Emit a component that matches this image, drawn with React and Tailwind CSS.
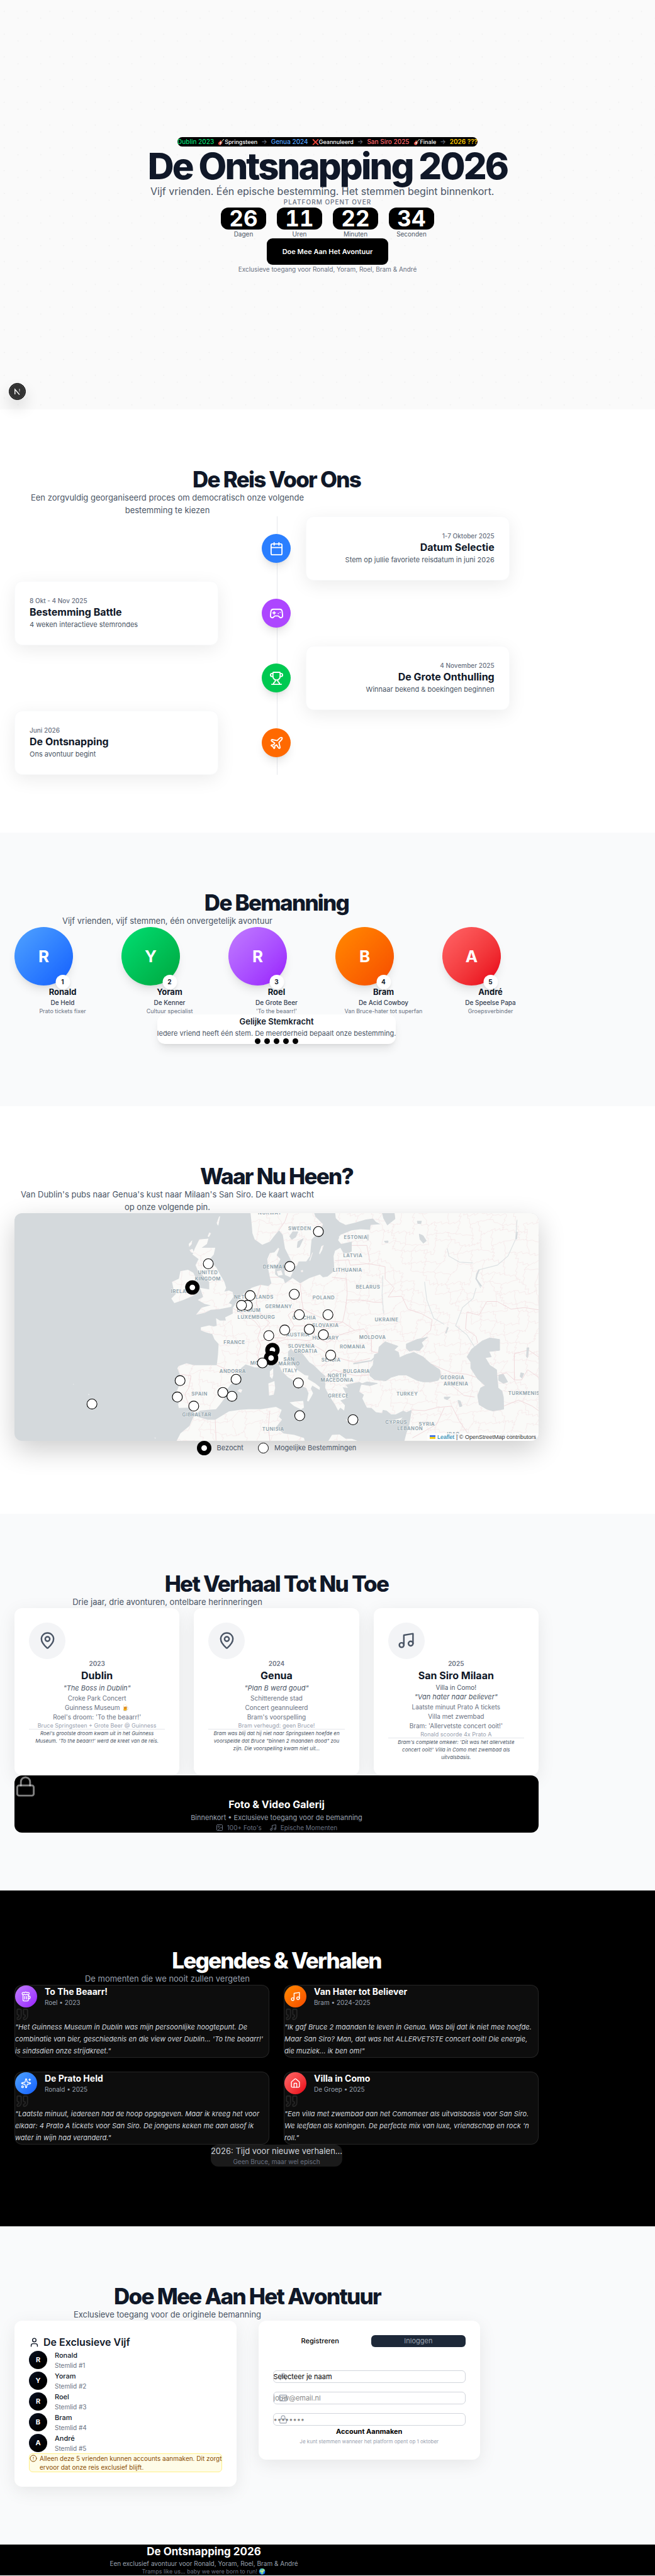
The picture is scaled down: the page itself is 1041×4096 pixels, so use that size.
import React from "react";
import {
  Calendar, Gamepad2, Trophy, Plane, MapPin, Music, Lock, Image as ImageIcon,
  Beer, Sparkles, House, Quote, User, Mail, CircleAlert,
} from "lucide-react";

const heading = "text-center text-[35px] leading-[38px] font-extrabold tracking-tighter";
const lead = "max-w-[486px] text-center text-[13px] leading-[20px] whitespace-pre-line";
const cardShadow = "shadow-[0_7px_29px_rgba(0,0,0,0.08)]";

function Section({ id, title, sub, tone = "bg-white", dark = false, width = "max-w-[833px]", children }) {
  return (
    <section id={id} className={`${tone} px-[23px] py-[92px]`}>
      <div className={width}>
        <h2 className={`${heading} ${dark ? "text-white" : "text-gray-900"}`}>{title}</h2>
        <p className={`${lead} ${dark ? "text-gray-400" : "text-gray-600"}`}>{sub}</p>
        {children}
      </div>
    </section>
  );
}

/* ---------- Hero ---------- */

function NextBadge() {
  return (
    <button type="button" aria-label="Ontwikkelmenu" className="absolute bottom-[15px] left-[14px] z-10 flex size-[27px] items-center justify-center rounded-full border border-black bg-[#333] shadow-[0_12px_23px_rgba(0,0,0,0.14)] ring-1 ring-inset ring-white/15">
      <svg viewBox="0 0 40 40" className="size-[27px]" fill="none">
        <defs>
          <linearGradient id="badgeFade" x1="0" y1="12" x2="0" y2="24" gradientUnits="userSpaceOnUse">
            <stop offset="0" stopColor="#fff" />
            <stop offset="1" stopColor="#fff" stopOpacity="0" />
          </linearGradient>
        </defs>
        <path d="M14 27V14.5L25.5 28" stroke="#fff" strokeWidth="2.2" />
        <path d="M25.5 13.5V23" stroke="url(#badgeFade)" strokeWidth="2.2" />
      </svg>
    </button>
  );
}

function Countdown({ value, label }) {
  return (
    <div className="w-[72px] text-center">
      <div className="rounded-[12px] bg-black text-[35px] leading-[35px] font-bold text-white tabular-nums">{value}</div>
      <div className="text-[10px] leading-[14px] text-gray-600">{label}</div>
    </div>
  );
}

function Hero() {
  const arrow = <span className="text-[10px] text-gray-500">→</span>;
  return (
    <header className="relative flex min-h-[651px] flex-col items-center justify-center bg-[#fafafa] pt-[3px]">
      <svg className="absolute inset-0 h-full w-full" aria-hidden="true" viewBox="0 0 1440 900" preserveAspectRatio="xMidYMid slice">
        <defs>
          <pattern id="dots" width="50" height="50" patternUnits="userSpaceOnUse">
            <rect x="9" y="24" width="2" height="2" fill="#ebebeb" />
            <rect x="39" y="39" width="2" height="2" fill="#ebebeb" />
          </pattern>
        </defs>
        <rect width="1440" height="900" fill="url(#dots)" />
      </svg>
      <div className="relative w-fit">
        <div className="mx-auto flex w-fit items-center gap-[6px] rounded-[8px] bg-black text-[10px] leading-[15px] font-medium whitespace-nowrap">
          <span className="text-green-400">Dublin 2023</span>
          <span className="text-[9px] text-white">🎸Springsteen</span>
          {arrow}
          <span className="text-blue-400">Genua 2024</span>
          <span className="text-[9px] text-white">❌Geannuleerd</span>
          {arrow}
          <span className="text-red-400">San Siro 2025</span>
          <span className="text-[9px] text-white">🎸Finale</span>
          {arrow}
          <span className="font-semibold text-yellow-400">2026 ???</span>
        </div>
        <h1 className="text-center text-[58px] leading-[63px] font-extrabold tracking-tighter text-gray-900">De Ontsnapping 2026</h1>
        <p className="max-w-[555px] text-center text-[16px] leading-[17px] text-gray-600">
          Vijf vrienden. Één epische bestemming. Het stemmen begint binnenkort.
        </p>
        <p className="text-center text-[10px] leading-[17px] font-medium tracking-widest text-gray-500 uppercase">Platform opent over</p>
        <div className="flex justify-center gap-[17px]">
          <Countdown value="26" label="Dagen" />
          <Countdown value="11" label="Uren" />
          <Countdown value="22" label="Minuten" />
          <Countdown value="34" label="Seconden" />
        </div>
        <a href="#meedoen" className="mx-auto block w-fit rounded-[9px] bg-black px-[25px] text-[11px] leading-[42px] font-semibold text-white">
          Doe Mee Aan Het Avontuur
        </a>
        <p className="text-center text-[10px] leading-[15px] text-gray-500">Exclusieve toegang voor Ronald, Yoram, Roel, Bram &amp; André</p>
      </div>
      <NextBadge />
    </header>
  );
}

/* ---------- Timeline ---------- */

const steps = [
  { date: "1-7 Oktober 2025", title: "Datum Selectie", text: "Stem op jullie favoriete reisdatum in juni 2026", Icon: Calendar, color: "bg-blue-500" },
  { date: "8 Okt - 4 Nov 2025", title: "Bestemming Battle", text: "4 weken interactieve stemrondes", Icon: Gamepad2, color: "bg-purple-500" },
  { date: "4 November 2025", title: "De Grote Onthulling", text: "Winnaar bekend & boekingen beginnen", Icon: Trophy, color: "bg-green-500" },
  { date: "Juni 2026", title: "De Ontsnapping", text: "Ons avontuur begint", Icon: Plane, color: "bg-orange-500" },
];

function Timeline() {
  return (
    <div className="relative flex flex-col gap-px">
      <div className="absolute inset-y-0 left-1/2 w-px bg-gray-200" />
      {steps.map(({ date, title, text, Icon, color }, i) => (
        <div key={title} className="grid grid-cols-[14fr_3fr_2fr_1fr_14fr_2fr] items-center">
          <div className={`row-start-1 rounded-[12px] border border-gray-50 bg-white p-[23px] ${cardShadow} ${i % 2 === 0 ? "col-start-5 text-right" : "col-start-1"}`}>
            <p className="text-[10px] leading-[14px] font-medium text-gray-500">{date}</p>
            <h3 className="text-[16px] leading-[23px] font-bold text-gray-900">{title}</h3>
            <p className="text-[11px] leading-[17px] text-gray-600">{text}</p>
          </div>
          <div className={`relative col-start-3 row-start-1 mx-auto flex size-[46px] items-center justify-center rounded-full text-white shadow-lg ${color}`}>
            <Icon className="size-[23px]" />
          </div>
        </div>
      ))}
    </div>
  );
}

/* ---------- Crew ---------- */

const crew = [
  { name: "Ronald", role: "De Held", note: "Prato tickets fixer", color: "from-blue-400 to-blue-600" },
  { name: "Yoram", role: "De Kenner", note: "Cultuur specialist", color: "from-green-400 to-green-600" },
  { name: "Roel", role: "De Grote Beer", note: "'To the beaarr!'", color: "from-purple-400 to-purple-600" },
  { name: "Bram", role: "De Acid Cowboy", note: "Van Bruce-hater tot superfan", color: "from-orange-400 to-orange-600" },
  { name: "André", role: "De Speelse Papa", note: "Groepsverbinder", color: "from-red-400 to-red-600" },
];

function Crew() {
  return (
    <>
      <div className="grid grid-cols-5 gap-[17px]">
        {crew.map((m, i) => (
          <article key={m.name} className="text-center">
            <div className="relative">
              <div className={`flex size-[93px] items-center justify-center rounded-full bg-linear-to-br text-[26px] font-bold text-white shadow-lg ${m.color}`}>{m.name[0]}</div>
              <span className="absolute -bottom-[6px] left-1/2 flex size-[23px] -translate-x-1/2 items-center justify-center rounded-full bg-white text-[10px] font-bold text-gray-900 shadow-md">{i + 1}</span>
            </div>
            <h3 className="text-[13px] leading-[20px] font-bold text-gray-900">{m.name}</h3>
            <p className="text-[10px] leading-[15px] font-medium text-gray-700">{m.role}</p>
            <p className="text-[9px] leading-[11px] text-gray-500">{m.note}</p>
          </article>
        ))}
      </div>
      <div className="mx-auto mb-[7px] w-fit rounded-[12px] bg-white text-center shadow-lg">
        <h3 className="text-[13px] leading-[22px] font-semibold text-gray-900">Gelijke Stemkracht</h3>
        <p className="text-[11px] leading-[16px] text-gray-600">Iedere vriend heeft één stem. De meerderheid bepaalt onze bestemming.</p>
        <div className="flex justify-center gap-[6px]">
          {crew.map((m) => <span key={m.name} className="size-[9px] rounded-full bg-black" />)}
        </div>
      </div>
    </>
  );
}

/* ---------- Map ---------- */

const land = [
  "455,655 470,630 490,600 530,555 580,520 600,512 640,500 690,508 710,490 700,450 690,400 683,330 700,290 730,285 755,255 762,262 745,305 770,330 755,360 735,380 735,430 760,450 790,462 800,490 850,455 900,490 960,455 1030,432 1050,450 1080,445 1110,420 1125,400 1120,310 1130,275 1165,255 1185,290 1215,292 1240,280 1240,215 1170,230 1150,205 1165,170 1240,140 1300,133 1360,137 1365,105 1430,100 1400,85 1380,62 1330,70 1260,90 1200,105 1160,85 1135,60 1130,20 2480,20 2480,1530 1587,1530 1600,1480 1620,1420 1627,1380 1635,1325 1600,1340 1580,1330 1530,1355 1500,1355 1470,1330 1445,1325 1440,1345 1400,1340 1370,1312 1340,1310 1330,1290 1310,1250 1320,1225 1290,1205 1300,1165 1310,1150 1290,1140 1240,1150 1200,1160 1215,1180 1180,1175 1205,1225 1200,1250 1165,1262 1195,1295 1190,1330 1165,1310 1150,1330 1130,1290 1090,1230 1065,1180 1065,1100 1040,1080 990,1030 960,1010 925,965 905,940 870,925 860,945 840,920 820,940 820,975 850,1010 880,1060 930,1095 955,1100 950,1120 1000,1150 1030,1175 1028,1193 980,1165 970,1185 985,1215 975,1235 955,1270 945,1265 955,1215 940,1180 900,1165 870,1140 820,1110 780,1070 755,1020 720,1000 690,1010 650,1045 600,1045 540,1025 510,1050 500,1080 500,1110 440,1160 410,1200 395,1230 400,1250 370,1290 345,1320 290,1325 240,1330 215,1350 195,1345 170,1310 100,1312 95,1290 110,1250 72,1250 75,1225 100,1170 110,1100 90,1050 100,1035 150,1018 200,1030 300,1030 350,1030 358,960 362,890 335,860 320,825 275,812 245,800 245,780 300,768 330,775 350,770 345,720 370,735 410,735 405,715 455,690",
  "572,20 580,100 585,160 600,200 650,235 700,215 735,170 760,140 785,170 800,260 840,340 850,395 880,370 890,345 940,345 965,310 975,200 1005,170 1040,130 1050,100 1000,50 990,20",
  "235,200 295,195 285,230 250,255 340,255 330,300 300,335 350,390 365,420 400,480 412,520 400,545 430,537 455,548 460,580 430,620 450,630 445,645 370,660 310,665 270,685 213,697 250,650 310,635 270,625 225,600 260,580 240,520 300,530 300,480 250,430 225,405 210,370 230,330 190,300 205,260",
  "110,410 160,400 195,420 215,460 215,500 200,570 130,600 70,620 50,590 80,560 65,530 55,480 100,460",
  "830,1275 870,1270 920,1265 925,1310 905,1322 860,1300", "690,1150 730,1135 735,1180 725,1225 695,1230",
  "700,1070 722,1050 722,1100 715,1120 700,1105", "1025,290 1040,245 1055,238 1045,270 1028,300",
  "960,340 980,285 982,290 966,340", "795,405 840,395 850,420 835,450 800,435", "745,410 775,405 785,435 755,440",
  "485,1200 500,1188 518,1192 510,1212", "165,230 188,205 185,230 168,250", "170,270 190,262 200,290 180,285",
  "350,90 365,50 372,48 360,110 352,100", "290,180 300,155 312,160 298,185", "1155,180 1178,170 1180,190 1158,195",
  "85,1530 110,1480 170,1430 200,1362 230,1372 290,1390 340,1390 430,1335 500,1325 560,1320 640,1320 740,1305 778,1325 760,1370 780,1390 740,1440 790,1480 860,1490 925,1510 930,1530",
  "1085,1530 1110,1490 1160,1487 1200,1515 1240,1515 1280,1530", "1500,1398 1530,1388 1575,1375 1555,1400 1520,1412",
  "-598,1155 -592,1155 -594,1160", "-500,1220 -490,1222 -492,1228", "-60,1505 -52,1512 -58,1514",
  "1200,1388 1290,1398 1285,1408 1210,1400", "905,405 918,403 918,415 906,415",
];

const lakes = [
  "1460,875 1545,905 1520,930 1548,945 1555,980 1600,960 1650,945 1710,975 1760,1020 1820,1060 1827,1100 1810,1130 1760,1140 1710,1140 1670,1130 1600,1095 1550,1095 1500,1110 1465,1133 1390,1125 1360,1100 1358,1060 1380,1030 1390,960 1415,950 1420,910",
  "1600,890 1670,860 1740,845 1700,880 1712,905 1685,935 1650,930 1620,938 1600,920",
  "2000,975 2030,925 2100,870 2150,850 2215,860 2215,932 2145,940 2160,975 2120,980 2150,1030 2195,1060 2198,1100 2205,1180 2230,1200 2240,1240 2242,1320 2170,1332 2130,1320 2080,1290 2070,1230 2090,1180 2120,1165 2070,1120 2025,1050 2025,1010",
  "2210,1095 2240,1090 2268,1140 2240,1150 2208,1130", "1300,1155 1340,1140 1410,1150 1360,1165",
  "1440,20 1520,20 1525,65 1475,105 1450,60", "830,180 850,150 885,150 870,185 845,200", "885,215 920,195 895,250 880,255",
  "1672,80 1700,80 1695,97 1675,95", "1685,165 1710,175 1732,210 1712,225 1690,200", "1455,212 1480,210 1478,222 1460,220",
  "1850,1240 1890,1240 1870,1258 1850,1250", "1940,1262 1955,1265 1967,1300 1952,1305", "1340,170 1352,170 1350,205 1342,205",
  "2355,1080 2375,1085 2362,1115 2350,1105", "2395,915 2408,915 2400,980 2392,975",
];

const frontiers = [
  "455,655 520,690 600,740 640,790 620,850 640,900 620,960 640,1040", "640,500 620,560 610,620 640,700 700,750 650,800",
  "700,450 760,450", "900,490 910,600 920,660 840,680 820,700 860,770 800,850 700,850 640,870",
  "920,660 1000,700 1090,740 1180,745 1200,650 1210,560 1205,460 1110,450", "1000,770 1080,790 1180,745 1260,800 1320,790",
  "860,770 980,770 1000,850 960,870 880,860 800,860 690,900", "1000,850 1080,880 1160,830 1260,800",
  "870,915 960,880 1060,940 1090,1000 1040,1040", "1090,1000 1100,960 1180,990 1260,1010 1360,985", "1065,1110 1120,1060 1180,1080 1270,1100 1350,1095",
  "110,1090 180,1100 165,1180 140,1220 170,1310", "350,1030 420,1060 510,1065", "760,140 800,80 820,20",
  "1130,340 1220,335 1230,370 1350,360 1460,380 1460,460 1520,520 1480,580 1570,575 1610,660 1700,690 1770,730 1760,800 1700,850",
  "1205,600 1300,600 1390,615 1445,615", "1240,240 1340,240 1360,350", "1320,790 1370,860 1370,940 1420,950",
  "1760,1020 1850,1060 1900,1080 2000,1090 2060,1110", "1880,1150 1920,1180 1980,1230 2050,1240",
  "1635,1325 1720,1330 1800,1310 1900,1300 1950,1400 2040,1530", "1640,1510 1800,1420 1850,1310",
  "2000,680 2080,700 2130,610 2200,610 2290,660 2380,650 2472,665", "2000,680 1990,790 2060,840 2070,885",
  "2312,1127 2312,955 2405,930 2472,975", "2242,1300 2340,1260 2430,1300 2472,1330", "2195,1100 2260,1080 2312,1127 2360,1127 2400,1060 2472,1110",
  "340,1390 345,1530", "700,1330 690,1430 700,1530",
];

/* Faint province borders: a wobbly lattice laid over the land. */
const provinces = (() => {
  const node = (i, j) => {
    const a = Math.sin(i * 127.1 + j * 311.7) * 43758.5453;
    const b = Math.sin(i * 269.5 + j * 183.3) * 24634.6345;
    return [i * 74 + (a - Math.floor(a)) * 52, j * 66 + (b - Math.floor(b)) * 46];
  };
  const out = [];
  const wobble = (p, q, s) => {
    let d = `M${p[0].toFixed(0)} ${p[1].toFixed(0)}`;
    for (let k = 1; k <= 5; k++) {
      const t = k / 5;
      const w = k === 5 ? 0 : Math.sin(s * 12.9 + k * 78.2) * 8;
      d += `L${(p[0] + (q[0] - p[0]) * t + w).toFixed(0)} ${(p[1] + (q[1] - p[1]) * t - w).toFixed(0)}`;
    }
    return d;
  };
  for (let i = 0; i < 34; i++) {
    for (let j = 0; j < 24; j++) {
      if ((i * 7 + j * 3) % 5 !== 0) out.push(wobble(node(i, j), node(i + 1, j), i + j * 3));
      if ((i * 3 + j * 5) % 4 !== 0) out.push(wobble(node(i, j), node(i, j + 1), i * 5 + j));
    }
  }
  return out.join("");
})();

const labels = [
  ["NORWAY", 700, 25], ["SWEDEN", 897, 125], ["DENMARK", 742, 379], ["UNITED", 291, 419], ["KINGDOM", 291, 457],
  ["IRELAND", 124, 543], ["NETHERLANDS", 594, 580], ["BELGIUM", 561, 668], ["LUXEMBOURG", 611, 712], ["GERMANY", 758, 640],
  ["POLAND", 1055, 582], ["CZECHIA", 926, 716], ["SLOVAKIA", 1066, 768], ["AUSTRIA", 885, 828], ["HUNGARY", 1068, 848],
  ["FRANCE", 466, 877], ["SLOVENIA", 908, 901], ["CROATIA", 936, 937], ["SAN", 827, 990], ["MARINO", 827, 1020],
  ["ITALY", 834, 1065], ["MONACO", 651, 1016], ["ANDORRA", 455, 1070], ["SERBIA", 1103, 996], ["NORTH", 1143, 1098],
  ["MACEDONIA", 1143, 1129], ["GREECE", 1152, 1231], ["SPAIN", 236, 1217], ["GIBRALTAR", 218, 1355], ["TUNISIA", 722, 1450],
  ["ESTONIA", 1266, 187], ["LATVIA", 1247, 307], ["LITHUANIA", 1212, 399], ["BELARUS", 1347, 514], ["UKRAINE", 1470, 728],
  ["MOLDOVA", 1377, 843], ["ROMANIA", 1245, 908], ["BULGARIA", 1271, 1068], ["GEORGIA", 1904, 1111], ["ARMENIA", 1927, 1150],
  ["TURKEY", 1605, 1217], ["TURKMENISTAN", 2412, 1215], ["CYPRUS", 1533, 1403], ["LEBANON", 1625, 1448], ["SYRIA", 1735, 1417],
  ["IRAQ", 1910, 1482], ["IRAN", 2265, 1497],
];

const pins = [
  [1020, 148], [294, 361], [831, 379], [570, 571], [552, 635], [513, 635], [861, 562], [894, 697], [1083, 697], [798, 798],
  [960, 793], [1053, 829], [693, 835], [1101, 964], [108, 1132], [477, 1123], [90, 1240], [390, 1210], [450, 1235],
  [198, 1300], [888, 1147], [897, 1363], [1248, 1390], [-473, 1286],
  [189, 517, true], [717, 930, true], [708, 983, true], [651, 1015],
];

function EuropeMap() {
  return (
    <div className="relative overflow-hidden rounded-[12px] bg-[#d4d9dc] shadow-[0_14px_43px_rgba(0,0,0,0.2)]">
      <svg viewBox="-984 27 3456 1500" className="block w-full" role="img" aria-label="Kaart van Europa">
        <defs>
          <clipPath id="landClip">{land.map((p) => <polygon key={p} points={p} />)}</clipPath>
        </defs>
        <g fill="#fafaf8" strokeLinejoin="round">{land.map((p) => <polygon key={p} points={p} />)}</g>
        <g clipPath="url(#landClip)" fill="none">
          <path d={provinces} stroke="#f5e6e8" strokeWidth="3" />
          {frontiers.map((p) => <polyline key={p} points={p} stroke="#efd6da" strokeWidth="4" strokeLinejoin="round" />)}
          <path d="M1445 440L1440 560L1450 690M1720 480L1735 600L1780 720L1850 760M2060 520L2040 590L1970 650L1925 770L2000 830L2050 910M1870 260L1880 310L1950 350L2040 355M2330 70L2320 200L2270 310L2200 370L2080 400L2060 460L2090 520" stroke="#dde2e4" strokeWidth="5" />
          <path d="M2080 400L2065 430L2060 460L2095 510M2330 150L2325 200M1860 820L1875 780M1420 950L1370 1000L1250 1020" stroke="#d4d9dc" strokeWidth="9" />
        </g>
        <g fill="#d4d9dc" stroke="#d4d9dc" strokeWidth="4" strokeLinejoin="round">{lakes.map((p) => <polygon key={p} points={p} />)}</g>
        <g fill="#8c9faa" stroke="#fafaf8" strokeWidth="5" strokeOpacity="0.7" paintOrder="stroke" fontSize="32" fontWeight="600" letterSpacing="2" textAnchor="middle">
          {labels.map(([t, x, y]) => <text key={t} x={x} y={y + 12}>{t}</text>)}
        </g>
        {pins.map(([x, y, visited]) => visited
          ? <circle key={`${x}-${y}`} cx={x} cy={y} r="33" fill="#fff" stroke="#000" strokeWidth="29" />
          : <circle key={`${x}-${y}`} cx={x} cy={y} r="33" fill="#fff" stroke="#000" strokeWidth="4.5" />)}
      </svg>
      <div className="absolute right-0 bottom-0 flex items-center gap-[3px] bg-white/80 px-[4px] text-[9px] leading-[12px] text-[#333] font-['Liberation_Sans',sans-serif]">
        <svg viewBox="0 0 12 8" className="h-[6px] w-[9px]" aria-hidden="true"><path fill="#4C7BE1" d="M0 0h12v4H0z" /><path fill="#FFD500" d="M0 4h12v3H0z" /><path fill="#E0BC00" d="M0 7h12v1H0z" /></svg>
        <a href="#leaflet" className="text-[#0078a8]">Leaflet</a>
        <span>| © OpenStreetMap contributors</span>
      </div>
    </div>
  );
}

function MapLegend() {
  return (
    <div className="relative flex justify-center gap-[23px] pb-px text-[11px] text-gray-600">
      <span className="flex items-center gap-[9px]"><span className="size-[23px] rounded-full border-[7px] border-black bg-white" />Bezocht</span>
      <span className="flex items-center gap-[9px]"><span className="size-[17px] rounded-full border border-black bg-white" />Mogelijke Bestemmingen</span>
    </div>
  );
}

/* ---------- Story ---------- */

const trips = [
  { year: "2023", city: "Dublin", quote: '"The Boss in Dublin"', lines: ["Croke Park Concert", "Guinness Museum 🍺", "Roel's droom: 'To the beaarr!'"], small: "Bruce Springsteen + Grote Beer @ Guinness", note: "Roel's grootste droom kwam uit in het Guinness\nMuseum. 'To the beaarr!' werd de kreet van de reis.", Icon: MapPin },
  { year: "2024", city: "Genua", quote: '"Plan B werd goud"', lines: ["Schitterende stad", "Concert geannuleerd", "Bram's voorspelling"], small: "Bram verheugd: geen Bruce!", note: 'Bram was blij dat hij niet naar Springsteen hoefde en\nvoorspelde dat Bruce "binnen 2 maanden dood" zou\nzijn. Die voorspelling kwam niet uit...', Icon: MapPin },
  { year: "2025", city: "San Siro Milaan", extra: "Villa in Como!", quote: '"Van hater naar believer"', lines: ["Laatste minuut Prato A tickets", "Villa met zwembad", "Bram: 'Allervetste concert ooit!'"], small: "Ronald scoorde 4x Prato A", note: "Bram's complete omkeer: 'Dit was het allervetste\nconcert ooit!' Villa in Como met zwembad als\nuitvalsbasis.", Icon: Music },
];

function Story() {
  return (
    <>
      <div className="grid grid-cols-3 gap-[23px]">
        {trips.map(({ year, city, extra, quote, lines, small, note, Icon }) => (
          <article key={year} className={`rounded-[12px] bg-white p-[23px] text-center text-[10px] leading-[15px] text-gray-500 ${cardShadow}`}>
            <div className="flex size-[58px] items-center justify-center rounded-full bg-gray-100 text-gray-600"><Icon className="size-[29px]" /></div>
            <p className="font-semibold">{year}</p>
            <h3 className="text-[16px] leading-[23px] font-bold text-gray-900">{city}</h3>
            {extra && <p className="leading-[14px] text-gray-600">{extra}</p>}
            <p className="text-[11px] leading-[17px] text-gray-600 italic">{quote}</p>
            {lines.map((l) => <p key={l}>{l}</p>)}
            <p className="text-[9px] leading-[11px] whitespace-nowrap text-gray-400">{small}</p>
            <p className="border-t border-gray-200 text-[8px] leading-[12px] whitespace-pre-line text-gray-600 italic">{note}</p>
          </article>
        ))}
      </div>
      <div className="relative rounded-[12px] bg-black text-center">
        <Lock className="size-[35px] text-white/50" />
        <h3 className="text-[16px] leading-[23px] font-bold text-white">Foto &amp; Video Galerij</h3>
        <p className="text-[11px] leading-[18px] text-gray-400">Binnenkort • Exclusieve toegang voor de bemanning</p>
        <div className="flex justify-center gap-[12px] text-[10px] leading-[15px] text-gray-500">
          <span className="flex items-center gap-[6px]"><ImageIcon className="size-[12px]" />100+ Foto's</span>
          <span className="flex items-center gap-[6px]"><Music className="size-[12px]" />Epische Momenten</span>
        </div>
      </div>
    </>
  );
}

/* ---------- Legends ---------- */

const legends = [
  { title: "To The Beaarr!", by: "Roel • 2023", text: "\"Het Guinness Museum in Dublin was mijn persoonlijke hoogtepunt. De\ncombinatie van bier, geschiedenis en die view over Dublin... 'To the beaarr!'\nis sindsdien onze strijdkreet.\"", Icon: Beer, color: "from-purple-400 to-purple-600" },
  { title: "Van Hater tot Believer", by: "Bram • 2024-2025", text: '"Ik gaf Bruce 2 maanden te leven in Genua. Was blij dat ik niet mee hoefde.\nMaar San Siro? Man, dat was het ALLERVETSTE concert ooit! Die energie,\ndie muziek... ik ben om!"', Icon: Music, color: "from-orange-400 to-orange-600" },
  { title: "De Prato Held", by: "Ronald • 2025", text: '"Laatste minuut, iedereen had de hoop opgegeven. Maar ik kreeg het voor\nelkaar: 4 Prato A tickets voor San Siro. De jongens keken me aan alsof ik\nwater in wijn had veranderd."', Icon: Sparkles, color: "from-blue-400 to-blue-600" },
  { title: "Villa in Como", by: "De Groep • 2025", text: "\"Een villa met zwembad aan het Comomeer als uitvalsbasis voor San Siro.\nWe leefden als koningen. De perfecte mix van luxe, vriendschap en rock 'n\nroll.\"", Icon: House, color: "from-red-400 to-red-600" },
];

function Legends() {
  return (
    <>
      <div className="grid grid-cols-2 gap-x-[23px] gap-y-[22px]">
        {legends.map(({ title, by, text, Icon, color }) => (
          <article key={title} className="rounded-[12px] border border-white/10 bg-white/5">
            <div className="flex items-center gap-[12px]">
              <div className={`flex size-[35px] items-center justify-center rounded-full bg-linear-to-br text-white ${color}`}><Icon className="size-[17px]" /></div>
              <div>
                <h3 className="text-[14px] leading-[20px] font-bold text-white">{title}</h3>
                <p className="text-[10px] leading-[15px] text-gray-400">{by}</p>
              </div>
            </div>
            <Quote className="h-[22px] w-[23px] text-white/10" />
            <p className="text-[11px] leading-[19px] whitespace-pre-line text-gray-300 italic">{text}</p>
          </article>
        ))}
      </div>
      <div className="mx-auto mb-[3px] w-fit rounded-[12px] bg-white/10 text-center">
        <p className="text-[13px] leading-[20px] text-gray-300">2026: Tijd voor nieuwe verhalen...</p>
        <p className="text-[10px] leading-[15px] text-gray-500">Geen Bruce, maar wel episch</p>
      </div>
    </>
  );
}

/* ---------- Sign-up ---------- */

const field = "relative block h-[20px] w-full appearance-none rounded-[6px] border border-gray-300 bg-transparent text-[11px] leading-[18px] text-black";

function SignUp() {
  return (
    <div className="grid grid-cols-2 items-start gap-[35px]">
      <div className={`rounded-[12px] bg-white p-[23px] ${cardShadow}`}>
        <h3 className="flex items-center gap-[6px] text-[16px] leading-[23px] font-semibold text-gray-900"><User className="size-[17px]" />De Exclusieve Vijf</h3>
        <ul>
          {crew.map((m, i) => (
            <li key={m.name} className="flex items-center gap-[12px]">
              <span className="flex size-[29px] items-center justify-center rounded-full bg-linear-to-br from-gray-900 to-black text-[11px] font-bold text-white">{m.name[0]}</span>
              <span className="flex flex-col">
                <span className="text-[11px] leading-[18px] font-medium text-gray-900">{m.name}</span>
                <span className="text-[10px] leading-[15px] text-gray-500">Stemlid #{i + 1}</span>
              </span>
            </li>
          ))}
        </ul>
        <div className="flex gap-[4px] rounded-[6px] border border-yellow-200 bg-yellow-50 text-[10px] leading-[14px] text-yellow-800">
          <CircleAlert className="mt-px size-[12px] shrink-0" />
          <p className="whitespace-pre">{"Alleen deze 5 vrienden kunnen accounts aanmaken. Dit zorgt\nervoor dat onze reis exclusief blijft."}</p>
        </div>
      </div>
      <form className={`rounded-[12px] bg-white p-[23px] text-[11px] text-black ${cardShadow}`}>
        <div className="grid grid-cols-2 gap-[6px] leading-[19px]">
          <button type="button" className="rounded-[6px] font-medium">Registreren</button>
          <button type="button" className="rounded-[6px] bg-gray-800 text-gray-400">Inloggen</button>
        </div>
        <div className="mt-[37px] flex flex-col gap-[14px]">
          <label className="relative block h-[20px]">
            <span className="sr-only">Naam</span>
            <User className="absolute top-[3px] left-[9px] size-[14px] text-gray-400" />
            <select className={field} defaultValue=""><option value="">Selecteer je naam</option>{crew.map((m) => <option key={m.name}>{m.name}</option>)}</select>
          </label>
          <label className="relative block h-[20px]">
            <span className="sr-only">E-mail</span>
            <Mail className="absolute top-[3px] left-[9px] size-[14px] text-gray-400" />
            <input type="email" placeholder="jouw@email.nl" className={`${field} placeholder:text-[#8a8a8a]`} />
          </label>
          <label className="relative block h-[20px]">
            <span className="sr-only">Wachtwoord</span>
            <Lock className="absolute top-[3px] left-[9px] size-[14px] text-gray-400" />
            <input type="password" placeholder="••••••••" className={`${field} placeholder:text-[#8a8a8a]`} />
          </label>
        </div>
        <button type="submit" className="block w-full leading-[19px] font-bold">Account Aanmaken</button>
        <p className="text-center text-[8px] leading-[12px] text-gray-400">Je kunt stemmen wanneer het platform opent op 1 oktober</p>
      </form>
    </div>
  );
}

export default function App() {
  return (
    <div className="bg-white font-['Inter',sans-serif] text-gray-900 antialiased">
      <Hero />
      <Section id="reis" title="De Reis Voor Ons" sub={"Een zorgvuldig georganiseerd proces om democratisch onze volgende\nbestemming te kiezen"}><Timeline /></Section>
      <Section id="bemanning" tone="bg-gray-50" title="De Bemanning" sub="Vijf vrienden, vijf stemmen, één onvergetelijk avontuur"><Crew /></Section>
      <Section id="kaart" title="Waar Nu Heen?" sub={"Van Dublin's pubs naar Genua's kust naar Milaan's San Siro. De kaart wacht\nop onze volgende pin."}><EuropeMap /><MapLegend /></Section>
      <Section id="verhaal" tone="bg-gray-50" title="Het Verhaal Tot Nu Toe" sub="Drie jaar, drie avonturen, ontelbare herinneringen"><Story /></Section>
      <Section id="legendes" tone="bg-black" dark title="Legendes &amp; Verhalen" sub="De momenten die we nooit zullen vergeten"><Legends /></Section>
      <Section id="meedoen" tone="bg-gray-50" width="max-w-[740px]" title="Doe Mee Aan Het Avontuur" sub="Exclusieve toegang voor de originele bemanning"><SignUp /></Section>
      <footer className="bg-black text-center">
        <div className="max-w-[648px]">
          <p className="text-[17px] leading-[23px] font-bold text-white">De Ontsnapping 2026</p>
          <p className="text-[10px] leading-[14px] text-gray-400">Een exclusief avontuur voor Ronald, Yoram, Roel, Bram &amp; André</p>
          <p className="text-[9px] leading-[12px] text-gray-500">Tramps like us... baby we were born to run! 🌍</p>
        </div>
      </footer>
    </div>
  );
}
